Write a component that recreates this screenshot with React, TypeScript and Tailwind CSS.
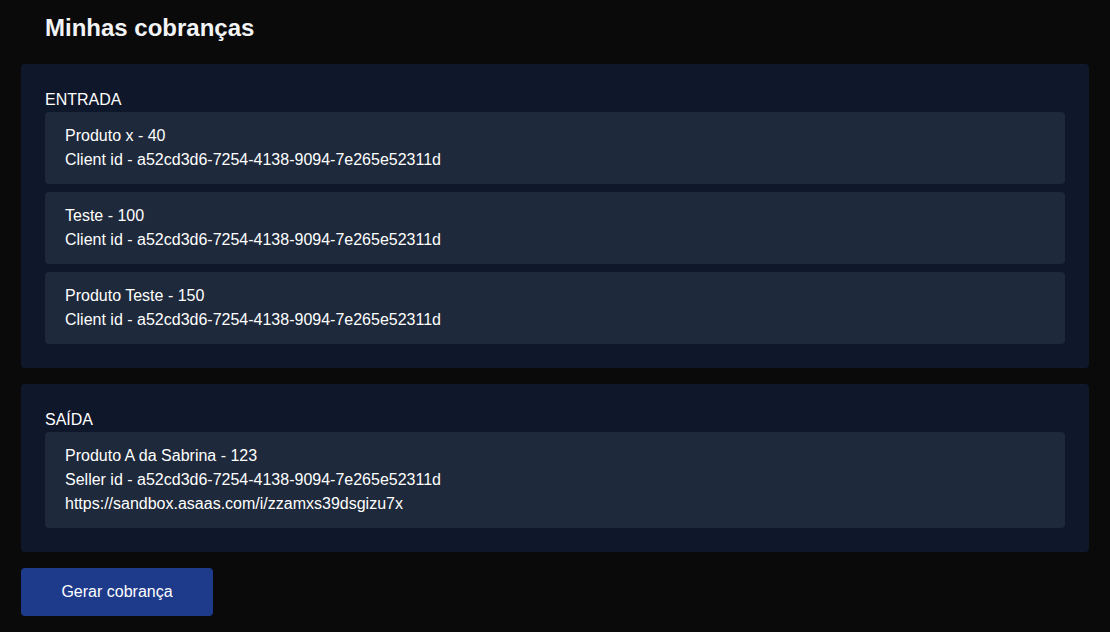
const entradas = [
  { title: "Produto x - 40", client: "a52cd3d6-7254-4138-9094-7e265e52311d" },
  { title: "Teste - 100", client: "a52cd3d6-7254-4138-9094-7e265e52311d" },
  { title: "Produto Teste - 150", client: "a52cd3d6-7254-4138-9094-7e265e52311d" },
];

const saidas = [
  {
    title: "Produto A da Sabrina - 123",
    seller: "a52cd3d6-7254-4138-9094-7e265e52311d",
    link: "https://sandbox.asaas.com/i/zzamxs39dsgizu7x",
  },
];

export default function App() {
  return (
    <main
      className="min-h-screen bg-[#0a0a0a] px-[21px] pt-3 pb-4 text-white"
      style={{ fontFamily: '"Liberation Sans", Arial, sans-serif' }}
    >
      <h1 className="mb-5 px-6 text-2xl font-bold leading-8 text-gray-100">
        Minhas cobranças
      </h1>

      {/* entrada */}
      <section className="mb-4 rounded bg-[#0f172a] p-6">
        <p className="text-base leading-6">ENTRADA</p>
        <div className="flex flex-col gap-2">
          {entradas.map((item) => (
            <div key={item.title} className="rounded bg-[#1e293b] px-5 py-3 leading-6">
              <p>{item.title}</p>
              <p>Client id - {item.client}</p>
            </div>
          ))}
        </div>
      </section>

      {/* saida */}
      <section className="mb-4 rounded bg-[#0f172a] p-6">
        <p className="text-base leading-6">SAÍDA</p>
        <div className="flex flex-col gap-2">
          {saidas.map((item) => (
            <div key={item.title} className="rounded bg-[#1e293b] px-5 py-3 leading-6">
              <p>{item.title}</p>
              <p>Seller id - {item.seller}</p>
              <p>{item.link}</p>
            </div>
          ))}
        </div>
      </section>

      <button className="h-12 w-48 rounded bg-[#1e3a8a] text-base text-white">
        Gerar cobrança
      </button>
    </main>
  );
}
